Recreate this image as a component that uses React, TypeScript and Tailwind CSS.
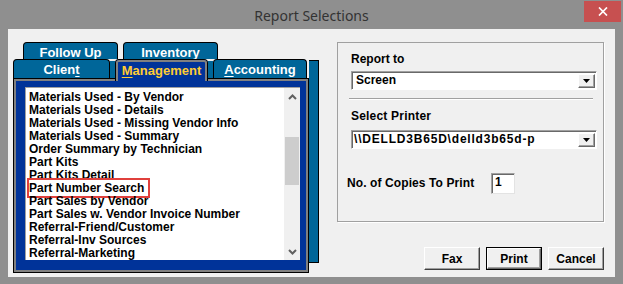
import React from 'react';

const sans = { fontFamily: '"Liberation Sans", Arial, sans-serif' };

const items = [
  'Materials Used - By Vendor',
  'Materials Used - Details',
  'Materials Used - Missing Vendor Info',
  'Materials Used - Summary',
  'Order Summary by Technician',
  'Part Kits',
  'Part Kits Detail',
  'Part Number Search',
  'Part Sales by Vendor',
  'Part Sales w. Vendor Invoice Number',
  'Referral-Friend/Customer',
  'Referral-Inv Sources',
  'Referral-Marketing',
];

function U({ children }: { children: React.ReactNode }) {
  return <span className="underline decoration-1 underline-offset-[2px]">{children}</span>;
}

function Chevron({ up }: { up?: boolean }) {
  return (
    <svg width="9" height="6" viewBox="0 0 9 6">
      <polyline
        points={up ? '1,5 4.5,1.5 8,5' : '1,1 4.5,4.5 8,1'}
        fill="none"
        stroke="#606060"
        strokeWidth="2"
      />
    </svg>
  );
}

function DropArrow() {
  return (
    <div className="w-[17px] h-[14px] bg-[#f0f0f0] border border-t-white border-l-white border-r-[#696969] border-b-[#696969] shadow-[inset_-1px_-1px_0_#a0a0a0] flex items-center justify-center">
      <svg width="7" height="4" viewBox="0 0 7 4">
        <polygon points="0,0 7,0 3.5,4" fill="#000" />
      </svg>
    </div>
  );
}

function Select({ value, wide }: { value: string; wide?: boolean }) {
  return (
    <div className="w-[246px] h-[19px] bg-white border border-t-[#a0a0a0] border-l-[#a0a0a0] border-r-white border-b-white shadow-[inset_1px_1px_0_#696969] flex items-center pl-[2px] pr-[1px]">
      <span className={wide ? 'flex-1 text-[12px] tracking-[0.8px] font-bold text-black leading-[13px]' : 'flex-1 pl-[2px] text-[12px] font-bold text-black leading-[13px]'}>
        {value}
      </span>
      <DropArrow />
    </div>
  );
}

function Btn({ label, primary }: { label: string; primary?: boolean }) {
  if (primary) {
    return (
      <div className="w-[56px] h-[23px] border border-black">
        <div className="w-full h-full bg-[#f0f0f0] border border-t-white border-l-white border-r-[#696969] border-b-[#696969] shadow-[inset_-1px_-1px_0_#a0a0a0] flex items-center justify-center text-[12px] font-bold text-black">
          {label}
        </div>
      </div>
    );
  }
  return (
    <div className="w-[56px] h-[23px] bg-[#f0f0f0] border border-t-white border-l-white border-r-[#404040] border-b-[#404040] shadow-[inset_-1px_-1px_0_#a0a0a0] flex items-center justify-center text-[12px] font-bold text-black">
      {label}
    </div>
  );
}

export default function App() {
  return (
    <div className="w-[623px] h-[284px] bg-[#8f8f8f] flex flex-col overflow-hidden" style={sans}>
      {/* title bar */}
      <div className="relative h-[29px] flex items-center justify-center">
        <span className="text-[14px] text-[#333333] pt-[2px]" style={{ fontFamily: '"Noto Sans", "Open Sans", sans-serif' }}>
          Report Selections
        </span>
        <div className="absolute right-[2px] top-[1px] w-[37px] h-[21px] bg-[#c75050] flex items-center justify-center">
          <svg width="10" height="9" viewBox="0 0 10 9">
            <path d="M1 0.5 L9 8.5 M9 0.5 L1 8.5" stroke="#fff" strokeWidth="1.7" />
          </svg>
        </div>
      </div>

      {/* client area */}
      <div className="mx-[8px] h-[248px] bg-[#f0f0f0] flex pl-[5px] pt-[13px]">
        {/* tab control */}
        <div className="w-[306px] flex flex-col">
          {/* back row */}
          <div className="flex h-[17px] pl-[10px] gap-[5px]">
            <div className="w-[95px] h-[17px] bg-[#006699] border border-b-0 border-black rounded-t-[4px] flex items-center justify-center text-white font-bold text-[13px] leading-none pt-[2px]">
              <span><U>F</U>ollow Up</span>
            </div>
            <div className="w-[95px] h-[17px] bg-[#006699] border border-b-0 border-black rounded-t-[4px] flex items-center justify-center text-white font-bold text-[13px] leading-none pt-[2px]">
              <span><U>I</U>nventory</span>
            </div>
          </div>

          <div className="flex">
            <div className="w-[296px] flex flex-col">
              {/* front row */}
              <div className="flex h-[19px]">
                <div className="w-[97px] h-[19px] bg-[#006699] border border-b-0 border-black rounded-t-[4px] flex items-center justify-center text-white font-bold text-[13px] leading-none pt-[1px]">
                  <span>Clien<U>t</U></span>
                </div>
                <div className="w-[5px] mt-[2px] bg-[#006699]" />
                <div className="relative z-10 w-[93px] h-[22px] -mb-[3px] bg-[#003399] border border-b-0 border-black rounded-t-[4px]">
                  <div className="w-full h-full border-2 border-b-0 border-[#808080] rounded-t-[3px] flex items-start justify-center pt-[1px] text-[#ffcc33] font-bold text-[13px] leading-[15px]">
                    <span><U>M</U>anagement</span>
                  </div>
                </div>
                <div className="w-[5px] mt-[2px] bg-[#006699]" />
                <div className="w-[94px] h-[19px] bg-[#006699] border border-b-0 border-black rounded-t-[4px] flex items-center justify-center text-white font-bold text-[13px] leading-none pt-[1px]">
                  <span><U>A</U>ccounting</span>
                </div>
              </div>

              {/* page panel */}
              <div className="h-[195px] border border-black">
                <div className="h-full border-2 border-[#808080] bg-[#003399] pl-[9px] pr-[6px] pt-[6px] pb-[10px]">
                  <div className="w-[275px] h-[173px] bg-white border-t border-l border-[#a0a0a0] flex">
                    <div className="flex-1 pl-[3px] pt-[3px] flex flex-col">
                      {items.map((t) => (
                        <div key={t} className="relative h-[13px] leading-[13px] text-[12px] font-bold text-black whitespace-nowrap">
                          {t}
                          {t === 'Part Number Search' && (
                            <div className="absolute -left-[2px] -top-[4px] w-[123px] h-[20px] border-2 border-[#e0403c]" />
                          )}
                        </div>
                      ))}
                    </div>
                    <div className="w-[16px] bg-[#f0f0f0] flex flex-col">
                      <div className="h-[17px] flex items-center justify-center">
                        <Chevron up />
                      </div>
                      <div className="flex-1 pt-[32px] px-[1px]">
                        <div className="h-[48px] bg-[#cdcdcd]" />
                      </div>
                      <div className="h-[17px] flex items-center justify-center">
                        <Chevron />
                      </div>
                    </div>
                  </div>
                </div>
              </div>
            </div>
            {/* stacked page edge */}
            <div className="w-[10px] h-[203px] mt-[1px] bg-[#006699] border border-l-0 border-black" />
          </div>
        </div>

        {/* right side */}
        <div className="ml-[18px] w-[267px] flex flex-col">
          <div className="h-[180px] border border-[#a0a0a0] shadow-[1px_1px_0_#ffffff] pl-[13px] pr-[5px] pt-[10px] flex flex-col">
            <div className="text-[12px] font-bold leading-[13px] text-black">Report to</div>
            <div className="mt-[5px]">
              <Select value="Screen" />
            </div>
            <div className="mt-[8px] -ml-[2px] w-[244px] h-[2px] border-t border-t-[#a0a0a0] border-b border-b-white" />
            <div className="mt-[10px] text-[12px] tracking-[0.2px] font-bold leading-[13px] text-black">Select Printer</div>
            <div className="mt-[7px]">
              <Select value={'\\\\DELLD3B65D\\delld3b65d-p'} wide />
            </div>
            <div className="mt-[24px] -ml-[4px] flex items-center">
              <div className="w-[144px] text-[12px] tracking-[0.1px] font-bold leading-[13px] text-black whitespace-nowrap">No. of Copies To Print</div>
              <div className="w-[24px] h-[21px] bg-white border border-t-[#a0a0a0] border-l-[#a0a0a0] border-r-[#e3e3e3] border-b-[#e3e3e3] shadow-[inset_1px_1px_0_#696969] pl-[3px] pt-[2px] text-[12px] font-bold leading-[13px] text-black">
                1
              </div>
            </div>
          </div>
          <div className="mt-[25px] flex justify-end gap-[6px]">
            <Btn label="Fax" />
            <Btn label="Print" primary />
            <Btn label="Cancel" />
          </div>
        </div>
      </div>
    </div>
  );
}
